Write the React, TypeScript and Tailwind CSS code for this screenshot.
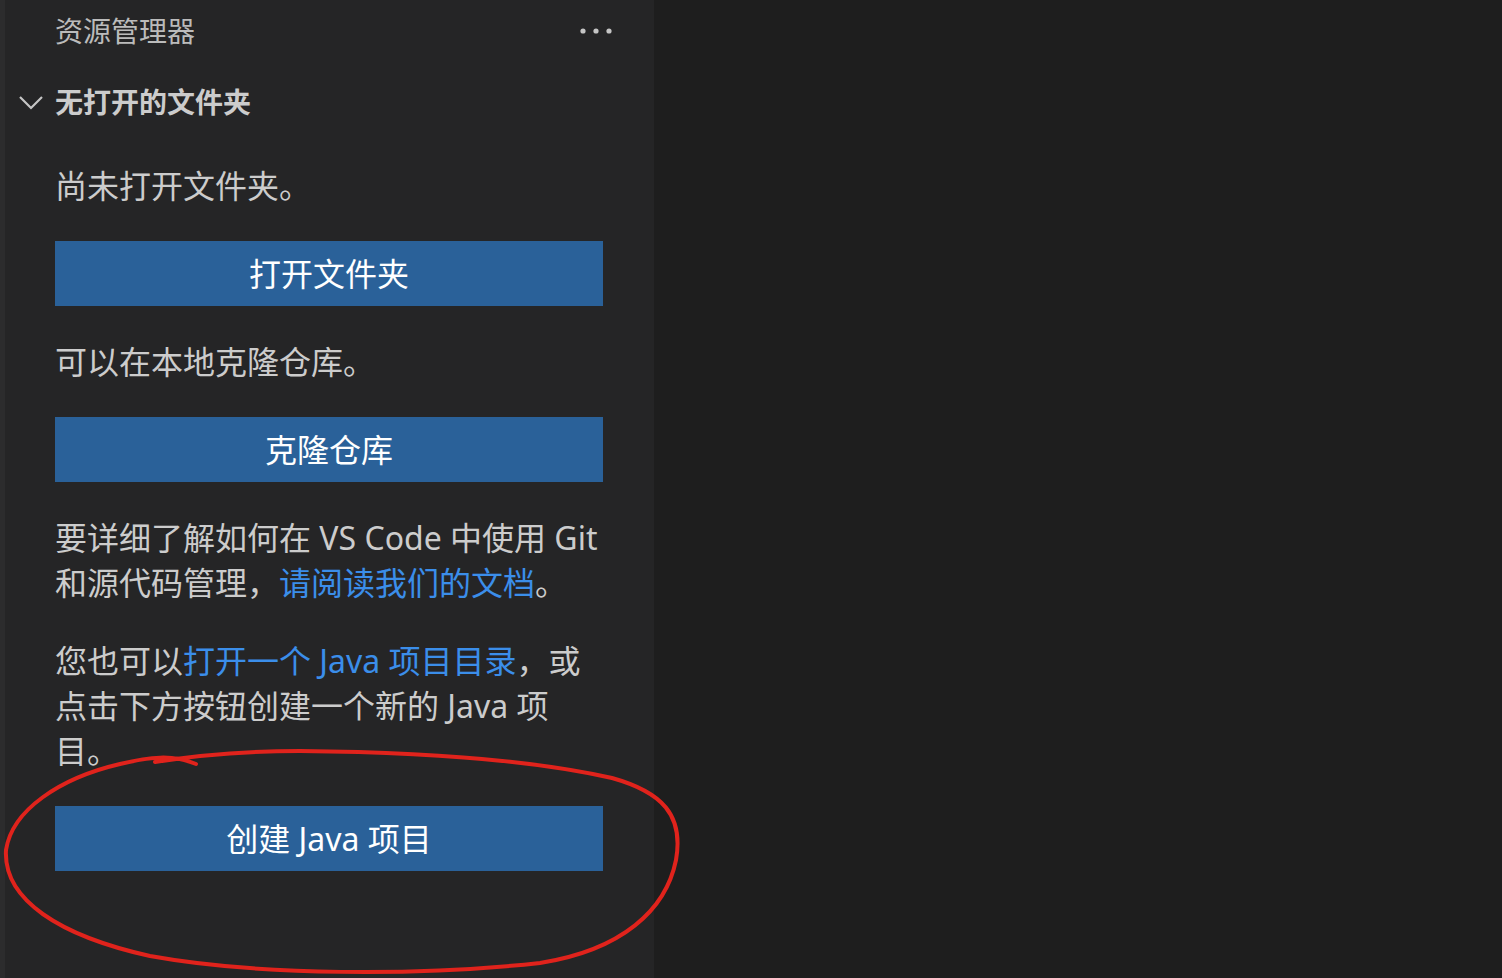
import { useState } from 'react';

const font = { fontFamily: '"Noto Sans", "Noto Sans CJK SC", sans-serif' };

function Ellipsis() {
  return (
    <svg width="34" height="10" viewBox="0 0 34 10" className="text-[#c5c5c5]">
      <circle cx="4" cy="5" r="2.6" fill="currentColor" />
      <circle cx="17" cy="5" r="2.6" fill="currentColor" />
      <circle cx="30" cy="5" r="2.6" fill="currentColor" />
    </svg>
  );
}

function Chevron() {
  return (
    <svg width="26" height="16" viewBox="0 0 26 16" fill="none">
      <polyline points="2,3 13,14 24,3" stroke="#c5c5c5" strokeWidth="2.2" />
    </svg>
  );
}

function Button({ label }: { label: string }) {
  return (
    <button className="h-[65px] w-full bg-[#2a6199] text-[32px] text-white leading-none">
      {label}
    </button>
  );
}

function Link({ children }: { children: React.ReactNode }) {
  return <a className="text-[#3b8eea] cursor-pointer">{children}</a>;
}

export default function App() {
  const [open] = useState(true);

  return (
    <div className="relative flex h-[978px] w-[1502px] overflow-hidden bg-[#1e1e1e]" style={font}>
      <div className="w-[5px] bg-[#2c2c2d]" />
      <aside className="flex w-[649px] flex-col bg-[#252526]">
        <header className="flex h-[62px] items-center justify-between pl-[50px] pr-[41px]">
          <span className="text-[28px] text-[#bbbbbb]">资源管理器</span>
          <Ellipsis />
        </header>

        <div className="flex h-[80px] items-center">
          <div className="flex w-[50px] items-center justify-center pl-[2px]">
            <Chevron />
          </div>
          <span className="text-[28px] font-bold text-[#cccccc]">无打开的文件夹</span>
        </div>

        {open && (
          <div className="flex flex-col gap-[33px] pl-[50px] pr-[51px] pt-[21px] text-[32px] leading-[45px] text-[#cccccc]">
            <p>尚未打开文件夹。</p>
            <Button label="打开文件夹" />
            <p>可以在本地克隆仓库。</p>
            <Button label="克隆仓库" />
            <p className="whitespace-nowrap">
              要详细了解如何在 VS Code 中使用 Git
              <br />
              和源代码管理，<Link>请阅读我们的文档</Link>。
            </p>
            <p className="whitespace-nowrap">
              您也可以<Link>打开一个 Java 项目目录</Link>，或
              <br />
              点击下方按钮创建一个新的 Java 项
              <br />
              目。
            </p>
            <Button label="创建 Java 项目" />
          </div>
        )}
      </aside>
      <main className="flex-1 bg-[#1e1e1e]" />

      {/* red annotation circle drawn on top of the screenshot */}
      <svg
        className="pointer-events-none absolute left-0 top-0"
        width="1502"
        height="978"
        viewBox="0 0 1502 978"
        fill="none"
      >
        <path
          d="M196,764 C172,754 150,757 120,764 C60,778 12,810 6,850 C3,900 60,936 150,956 C260,976 420,976 540,963 C622,950 666,910 676,860 C684,815 662,792 612,778 C532,760 420,752 300,751 C240,751 192,756 155,762"
          stroke="#e0231c"
          strokeWidth="4"
          strokeLinecap="round"
        />
      </svg>
    </div>
  );
}
